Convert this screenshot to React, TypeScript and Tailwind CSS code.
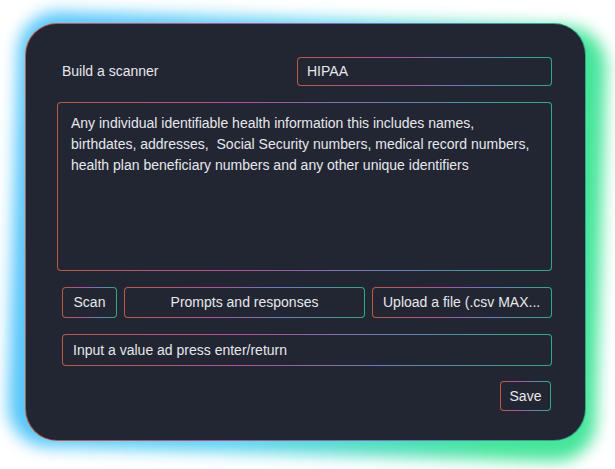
import type { ReactNode } from 'react';

const edge =
  'bg-[linear-gradient(90deg,#b85a44_0%,#b84f98_35%,#6a7bbf_65%,#2fab82_100%)]';

type BoxProps = {
  className?: string;
  innerClassName?: string;
  children?: ReactNode;
};

const GradientBox = ({ className = '', innerClassName = '', children }: BoxProps) => (
  <div className={`${edge} rounded-[4px] p-px ${className}`}>
    <div className={`h-full w-full rounded-[3px] bg-[#222633] ${innerClassName}`}>
      {children}
    </div>
  </div>
);

const App = () => {
  return (
    <div className="h-[469px] w-[615px] bg-white pl-[25px] pt-[23px] font-['Liberation_Sans',Arial,sans-serif] text-[14px] text-[#e6e8ec]">
      <div className="relative h-[418px] w-[561px]">
        {/* glow */}
        <div className="absolute -bottom-[13px] -left-[12px] -right-[15px] -top-[4px] rotate-[1.6deg] rounded-[40px] bg-[linear-gradient(100deg,#56c6fb_15%,#5ad3f0_45%,#44e59a_85%)] blur-[8px]" />
        <div
          className={`relative h-full w-full rounded-[32px] p-px ${edge}`}
        >
          <div className="flex h-full w-full flex-col rounded-[31px] bg-[#222633] pl-[31px] pr-[33px] pt-[33px]">
            <div className="flex h-[29px] items-center">
              <span className="ml-[5px]">Build a scanner</span>
              <GradientBox className="ml-auto h-[29px] w-[255px]" innerClassName="flex items-center px-[9px]">
                HIPAA
              </GradientBox>
            </div>

            <GradientBox className="mt-4 h-[169px] w-[495px]" innerClassName="px-[13px] pt-[10px] leading-[21px]">
              <p>Any individual identifiable health information this includes names,</p>
              <p className="whitespace-pre">
                birthdates, addresses,  Social Security numbers, medical record numbers,
              </p>
              <p>health plan beneficiary numbers and any other unique identifiers</p>
            </GradientBox>

            <div className="ml-[5px] mt-4 flex h-[31px] gap-[7px]">
              <GradientBox className="w-[55px]" innerClassName="flex items-center justify-center">
                Scan
              </GradientBox>
              <GradientBox className="w-[241px]" innerClassName="flex items-center justify-center">
                Prompts and responses
              </GradientBox>
              <GradientBox className="w-[180px]" innerClassName="flex items-center pl-[10px] whitespace-nowrap">
                Upload a file (.csv MAX...
              </GradientBox>
            </div>

            <GradientBox className="ml-[5px] mt-4 h-[32px] w-[490px]" innerClassName="flex items-center px-[10px]">
              Input a value ad press enter/return
            </GradientBox>

            <div className="mt-[15px] flex justify-end pr-px">
              <GradientBox className="h-[30px] w-[51px]" innerClassName="flex items-center justify-center">
                Save
              </GradientBox>
            </div>
          </div>
        </div>
      </div>
    </div>
  );
};

export default App;
